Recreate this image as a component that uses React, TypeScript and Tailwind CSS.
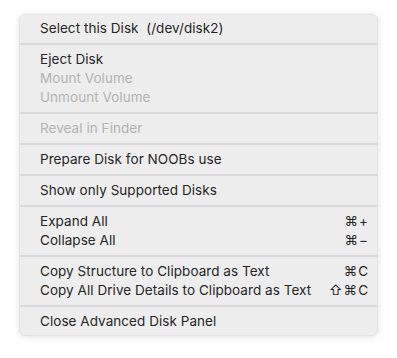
import React from "react";

type Item = { label: string; shortcut?: string; disabled?: boolean };

const groups: Item[][] = [
  [{ label: "Select this Disk  (/dev/disk2)" }],
  [
    { label: "Eject Disk" },
    { label: "Mount Volume", disabled: true },
    { label: "Unmount Volume", disabled: true },
  ],
  [{ label: "Reveal in Finder", disabled: true }],
  [{ label: "Prepare Disk for NOOBs use" }],
  [{ label: "Show only Supported Disks" }],
  [
    { label: "Expand All", shortcut: "⌘+" },
    { label: "Collapse All", shortcut: "⌘−" },
  ],
  [
    { label: "Copy Structure to Clipboard as Text", shortcut: "⌘C" },
    { label: "Copy All Drive Details to Clipboard as Text", shortcut: "⇧⌘C" },
  ],
  [{ label: "Close Advanced Disk Panel" }],
];

export default function App() {
  return (
    <div className="w-[397px] h-[358px] bg-white pt-[14px] pl-[19px]">
      <div
        className="w-[359px] rounded-[6px] bg-[#ededed] py-[4px] shadow-[0_1px_6px_rgba(0,0,0,0.12)] border border-[#e4e4e4] text-[13.5px] tracking-[0.05px] text-[#262626]"
        style={{ fontFamily: "Inter, 'Liberation Sans', sans-serif" }}
      >
        {groups.map((group, gi) => (
          <div key={gi}>
            {gi > 0 && <div className="my-[5px] h-[2px] bg-[#dadada]" />}
            {group.map((item) => (
              <div
                key={item.label}
                className={`h-[19px] flex items-center justify-between pl-[20px] pr-[8px] ${
                  item.disabled ? "text-[#b3b3b3]" : ""
                }`}
              >
                <span className="whitespace-pre">{item.label}</span>
                {item.shortcut && <span className="tracking-[1px]">{item.shortcut}</span>}
              </div>
            ))}
          </div>
        ))}
      </div>
    </div>
  );
}
